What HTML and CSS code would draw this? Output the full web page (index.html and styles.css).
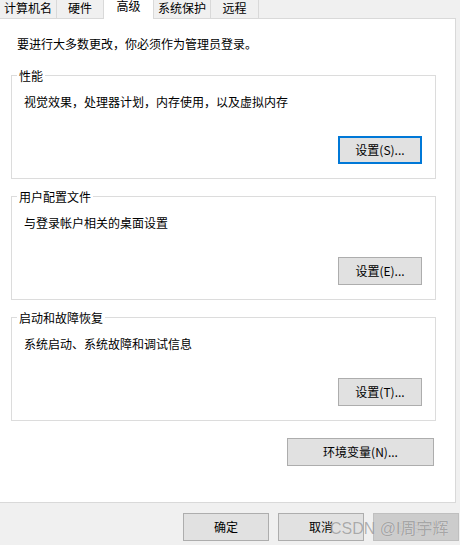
FILE: index.html
```html
<!DOCTYPE html>
<html lang="zh-CN">
<head>
<meta charset="utf-8">
<title>系统属性 - 高级</title>
<link rel="stylesheet" href="styles.css">
</head>
<body>
<div class="window">
  <div class="tabs">
    <div class="tab t1">计算机名</div>
    <div class="tab t2">硬件</div>
    <div class="tab sel">高级</div>
    <div class="tab t4">系统保护</div>
    <div class="tab t5">远程</div>
    <div class="tab-fill"></div>
  </div>
  <div class="panel">
    <p class="intro">要进行大多数更改，你必须作为管理员登录。</p>
    <section class="group">
      <div class="group-title">性能</div>
      <p class="desc">视觉效果，处理器计划，内存使用，以及虚拟内存</p>
      <button class="btn set focus">设置(S)...</button>
    </section>
    <section class="group">
      <div class="group-title">用户配置文件</div>
      <p class="desc">与登录帐户相关的桌面设置</p>
      <button class="btn set">设置(E)...</button>
    </section>
    <section class="group">
      <div class="group-title">启动和故障恢复</div>
      <p class="desc">系统启动、系统故障和调试信息</p>
      <button class="btn set">设置(T)...</button>
    </section>
    <div class="env-row">
      <button class="btn env">环境变量(N)...</button>
    </div>
  </div>
  <div class="footer">
    <button class="btn foot">确定</button>
    <button class="btn foot">取消</button>
    <button class="btn foot disabled">应用(A)</button>
    <span class="watermark">CSDN @I周宇辉</span>
  </div>
</div>
</body>
</html>
```
FILE: styles.css
```css
* { box-sizing: border-box; }
html, body {
  margin: 0;
  padding: 0;
  background: #f0f0f0;
}
body {
  width: 460px;
  height: 545px;
  overflow: hidden;
  font-family: "Noto Sans CJK SC", "Microsoft YaHei", sans-serif;
  font-size: 12px;
  color: #000;
}
.window {
  width: 460px;
  height: 545px;
  display: flex;
  flex-direction: column;
}
.tabs {
  display: flex;
  width: 456px;
  height: 19px;
}
.tab {
  height: 19px;
  background: #f0f0f0;
  border-bottom: 1px solid #d9d9d9;
  border-right: 1px solid #d9d9d9;
  text-align: center;
  line-height: 16px;
  white-space: nowrap;
}
.t1 { width: 57px; }
.t2 { width: 46px; border-right: none; }
.sel {
  width: 51px;
  background: #fff;
  border-left: 1px solid #d9d9d9;
  border-bottom: none;
  line-height: 12px;
}
.t4 { width: 57px; }
.t5 { width: 48px; }
.tab-fill {
  flex: 1;
  height: 19px;
  border-bottom: 1px solid #d9d9d9;
}
.panel {
  width: 456px;
  height: 484px;
  background: #fff;
  border-right: 1px solid #d9d9d9;
  border-bottom: 1px solid #d9d9d9;
  padding: 18px 0 0 11px;
  display: flex;
  flex-direction: column;
}
.intro {
  margin: 0 0 0 6px;
  line-height: 14px;
  height: 14px;
}
.group {
  width: 425px;
  height: 104px;
  border: 1px solid #dcdcdc;
  display: flex;
  flex-direction: column;
  align-items: flex-start;
  margin-top: 17px;
}
.intro + .group { margin-top: 24px; }
.group-title {
  margin: -7px 0 0 5px;
  padding: 0 2px;
  background: #fff;
  line-height: 14px;
  height: 14px;
}
.desc {
  margin: 12px 0 0 12px;
  line-height: 14px;
}
.btn {
  font-family: inherit;
  font-size: 12px;
  color: #000;
  background: #e1e1e1;
  border: 1px solid #adadad;
  height: 28px;
  padding: 0;
  line-height: 26px;
  text-align: center;
  white-space: nowrap;
}
.set {
  width: 84px;
  margin: auto 13px 14px 0;
  align-self: flex-end;
}
.focus {
  border: 2px solid #0078d7;
  line-height: 24px;
}
.env-row {
  width: 425px;
  display: flex;
  justify-content: flex-end;
  padding-right: 2px;
  margin-top: 17px;
}
.env { width: 147px; }
.footer {
  position: relative;
  flex: 1;
  display: flex;
  gap: 9px;
  padding: 10px 0 0 183px;
}
.foot { width: 86px; }
.disabled {
  background: #cccccc;
  border-color: #bfbfbf;
  color: #c4c4c4;
}
.watermark {
  position: absolute;
  left: 330px;
  top: 16px;
  font-family: "Liberation Sans", "Noto Sans CJK SC", sans-serif;
  font-size: 16px;
  line-height: 20px;
  color: rgba(110, 110, 110, 0.55);
  text-shadow: 0 0 1px rgba(255, 255, 255, 0.6);
  white-space: nowrap;
}
```
